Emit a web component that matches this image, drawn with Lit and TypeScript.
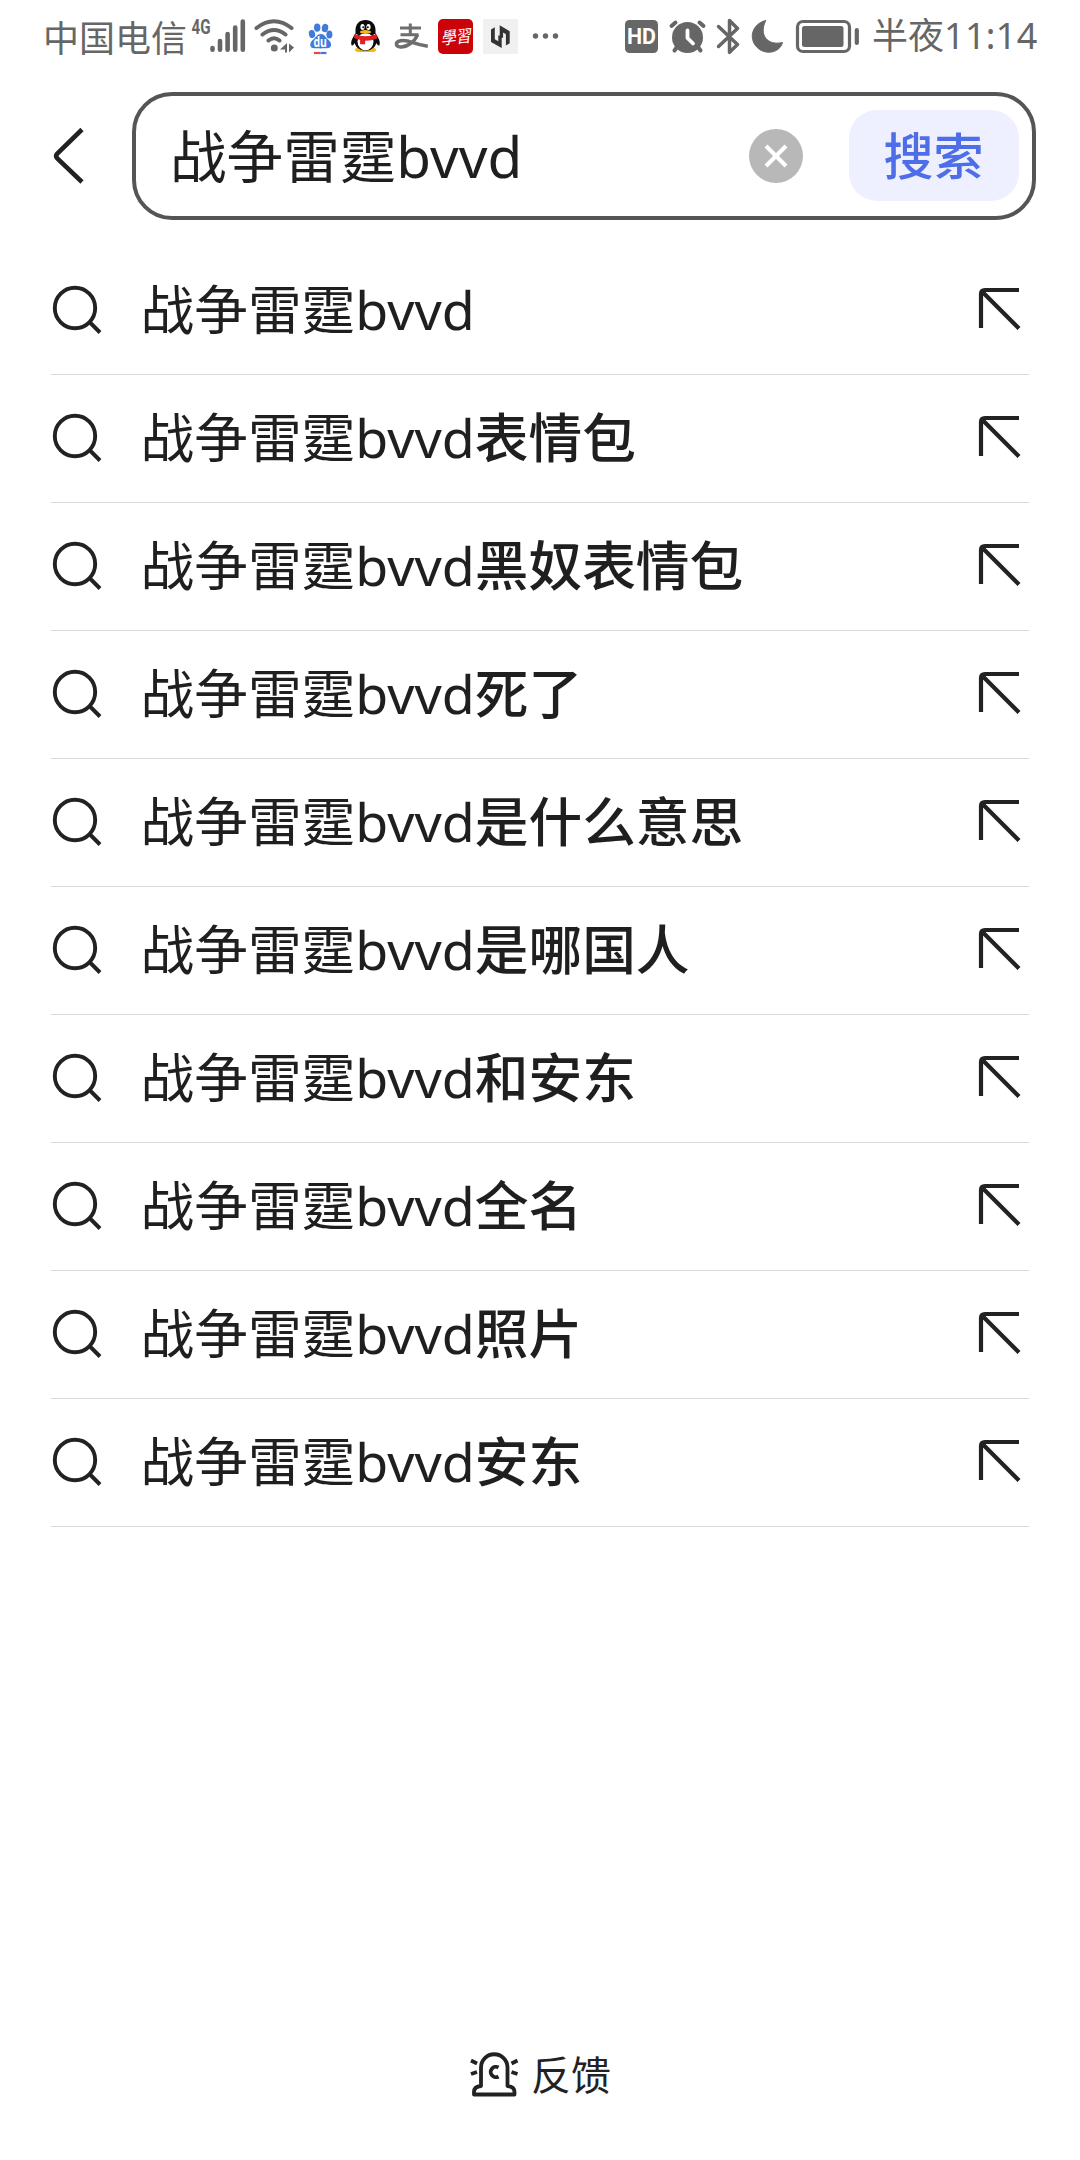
import { LitElement, html, css } from "lit";
import { customElement, property } from "lit/decorators.js";

const FONT = css`"Noto Sans", "Noto Sans CJK SC", sans-serif`;

@customElement("status-bar")
class StatusBar extends LitElement {
  static styles = css`
    :host {
      display: flex;
      justify-content: space-between;
      box-sizing: border-box;
      width: 100%;
      height: 72px;
      padding: 0 42px 0 43px;
      color: #666;
      font: 400 36px/72px ${FONT};
    }
    .group { display: flex; align-items: flex-start; white-space: nowrap; }
    .carrier { width: 147px; height: 72px; font-family: "Noto Sans CJK SC", sans-serif; }
    .time { width: 166px; height: 72px; }
    .digits { display: inline-block; letter-spacing: 0.3px; }
    svg { display: block; flex: none; }
    .net { font: 700 21px Roboto, sans-serif; fill: #666; }
    .hd { font: 700 22.5px Roboto, sans-serif; fill: #fff; }
    .du { font: 700 14px "Open Sans", sans-serif; fill: #fff; }
    .study { font: italic 400 17px "Noto Sans CJK TC", sans-serif; fill: #fff; }
  `;

  render() {
    return html`
      <div class="group">
        <span class="carrier">中国电信</span>
        <svg width="58" height="72" viewBox="190 0 58 72">
          <text class="net" x="191.500" y="34" textLength="19" lengthAdjust="spacingAndGlyphs">4G</text>
          <g stroke="#666" stroke-width="4.600" stroke-linecap="round">
            <path d="M212.500 48v1.800M220 41v8.800M227.600 34v15.800M235.200 27.500v22.300M242.800 21.500v28.300" />
          </g>
        </svg>
        <svg width="52" height="72" viewBox="248 0 52 72">
          <g fill="none" stroke="#666" stroke-width="4" stroke-linecap="round">
            <path d="M256.500 28Q274 14.500 291.500 28M262.500 34.500Q274 25.500 285.500 34.500M268.500 40.500Q274 36 279.500 40.500" />
          </g>
          <circle cx="274.300" cy="48" r="3.500" fill="#666" />
          <path d="M287 43v9.500h-2v-3h-5zM289 43.500v9l5-5z" fill="#666" />
        </svg>
        <svg width="42" height="72" viewBox="300 0 42 72">
          <g fill="#3f7bd9">
            <ellipse cx="312" cy="34" rx="3.100" ry="4.100" transform="rotate(-12 312 34)" />
            <ellipse cx="317.200" cy="27.600" rx="3.200" ry="4.200" />
            <ellipse cx="325" cy="28" rx="3.200" ry="4.200" transform="rotate(12 325 28)" />
            <ellipse cx="329.400" cy="34.500" rx="3" ry="4" />
            <path d="M321 34c-3.500 0-5 3.200-7.500 5.200-5 4-3.800 9 .8 9.100 3.200.1 9.200.1 12.600 0 5.200-.2 5.500-5.300 1.400-8.600-2.700-2.200-3.900-5.700-7.300-5.700z" />
          </g>
          <text class="du" x="313.500" y="46.500" textLength="13.500" lengthAdjust="spacingAndGlyphs">du</text>
          <path d="M314 53h6.500" stroke="#e24a4a" stroke-width="2.200" />
          <path d="M320.500 53h6" stroke="#3f7bd9" stroke-width="2.200" />
        </svg>
        <svg width="48" height="72" viewBox="342 0 48 72">
          <path d="M355 50q0-2.500 4-2.500h13q4 0 4 2.500 0 2-5 2h-11q-5 0-5-2z" fill="#f5b51c" />
          <path d="M356 33c-4 5-5.500 9-4.500 12 .6 1.500 2.500-.5 4-3zM375 33c4 5 5.500 9 4.500 12-.6 1.500-2.500-.5-4-3z" fill="#0b0b0b" />
          <ellipse cx="365.500" cy="41" rx="11" ry="10" fill="#0b0b0b" />
          <ellipse cx="365.500" cy="41.500" rx="8" ry="9" fill="#fff" />
          <path d="M355.500 34v-4c0-6 4-10 10-10s10 4 10 10v4z" fill="#0b0b0b" />
          <path d="M354.500 34q11 4.500 22 0l.6 4.500q-6 2.500-12 2.300v3.500h-5v-4.500q-3-.3-6-1.800z" fill="#e01f26" />
          <ellipse cx="362.500" cy="27" rx="2.100" ry="3" fill="#fff" />
          <ellipse cx="368.500" cy="27" rx="2.100" ry="3" fill="#fff" />
          <circle cx="363.200" cy="27.300" r="1" fill="#111" />
          <circle cx="367.800" cy="27.300" r="1" fill="#111" />
          <ellipse cx="365.500" cy="32" rx="5.600" ry="1.900" fill="#f5b51c" />
        </svg>
        <svg width="44" height="72" viewBox="390 0 44 72">
          <g fill="none" stroke="#6e6e6e" stroke-width="3">
            <path d="M400 28h21M410.300 23.500v11M400.500 34.700h18" />
            <path d="M417.500 34.500C415 42 406 47.500 400.500 47c-5-.4-5-4-2-5.600 4.500-2.300 10-.5 14.500 1.200Q420 45 427.800 46.300" stroke-width="3.500" />
          </g>
        </svg>
        <svg width="44" height="72" viewBox="434 0 44 72">
          <rect x="438" y="19" width="35" height="35" rx="5" fill="#cb0207" />
          <text class="study" x="440.500" y="43" textLength="30" lengthAdjust="spacingAndGlyphs" transform="rotate(-6 455 36)">學習</text>
        </svg>
        <svg width="50" height="72" viewBox="478 0 50 72">
          <rect x="483" y="19" width="35" height="35" fill="#f0f0f0" />
          <g fill="#333">
            <path d="M491 29.500l3.800-2.300v12l3.500 2v-5.700h3.400V48L491 42z" />
            <path d="M509.700 43.300l-3.800 2.300V34.200l-2.800-1.700v5.200h-3.400V25.300l10 6z" />
          </g>
        </svg>
        <svg width="36" height="72" viewBox="528 0 36 72" fill="#666">
          <circle cx="535.500" cy="36" r="2.700" /><circle cx="545.500" cy="36" r="2.700" /><circle cx="555.500" cy="36" r="2.700" />
        </svg>
      </div>
      <div class="group">
        <svg width="44" height="72" viewBox="620 0 44 72">
          <rect x="625" y="20" width="33" height="33" rx="4.500" fill="#666" />
          <text class="hd" x="627" y="44.300" textLength="29" lengthAdjust="spacingAndGlyphs">HD</text>
        </svg>
        <svg width="46" height="72" viewBox="664 0 46 72">
          <circle cx="687.500" cy="37.500" r="15.500" fill="#666" />
          <g fill="none" stroke="#666" stroke-width="4" stroke-linecap="round">
            <path d="M671.500 26l4-3.500M703.500 26l-4-3.500M677 47l-2.500 3.500M698 47l2.500 3.500" />
          </g>
          <path d="M687.500 30.500v7.500l5.500 5.500" fill="none" stroke="#fff" stroke-width="3.800" stroke-linecap="round" stroke-linejoin="round" />
        </svg>
        <svg width="37" height="72" viewBox="710 0 37 72">
          <path d="M718.500 26.500L737.500 44.500 729.500 52.300V20.500L737.500 28.500 718.500 46.500" fill="none" stroke="#666" stroke-width="3.500" stroke-linecap="round" stroke-linejoin="round" />
        </svg>
        <svg width="44" height="72" viewBox="747 0 44 72">
          <path d="M765.800 20.500C752 24 748.500 38 756.500 46.800 764.500 55.500 779.500 53.500 782.500 42.500 767.500 46 758.500 35 765.800 20.500z" fill="#666" stroke="#666" stroke-linejoin="round" />
        </svg>
        <svg width="81" height="72" viewBox="791 0 81 72">
          <rect x="797.500" y="21.500" width="52" height="30" rx="5.500" fill="none" stroke="#666" stroke-width="3.200" />
          <rect x="802" y="26" width="41.500" height="21" rx="2.500" fill="#666" />
          <path d="M856.800 30v13" stroke="#666" stroke-width="4.200" stroke-linecap="round" />
        </svg>
        <span class="time">半夜<span class="digits">11:14</span></span>
      </div>
    `;
  }
}

@customElement("search-header")
class SearchHeader extends LitElement {
  @property() query = "";

  static styles = css`
    :host {
      display: flex;
      box-sizing: border-box;
      width: 100%;
      padding: 20px 44px 0 50px;
      align-items: center;
      font-family: ${FONT};
    }
    svg { display: block; flex: none; }
    .back { width: 40px; height: 60px; margin-right: 42px; }
    .box {
      flex: 1;
      display: flex;
      align-items: center;
      box-sizing: border-box;
      height: 128px;
      padding: 0 13px 0 34px;
      border: 4px solid #555;
      border-radius: 40px;
    }
    .query {
      flex: 1;
      font-size: 56.6px;
      line-height: 80px;
      color: #1f1f1f;
      white-space: nowrap;
    }
    .clear { margin-right: 46px; }
    .go {
      width: 170px;
      height: 91px;
      border-radius: 28px;
      background: #eef0ff;
      color: #4e6ee8;
      font: 500 50px/87px "Noto Sans CJK SC", sans-serif;
      text-align: center;
      text-indent: -1px;
      margin-top: -1px;
    }
  `;

  render() {
    return html`
      <svg class="back" viewBox="50 126 40 60">
        <path d="M82 129.500L57.300 153.500Q55 156 57.300 158.500L82 182" fill="none" stroke="#222" stroke-width="4.600" />
      </svg>
      <div class="box">
        <span class="query">${this.query}</span>
        <svg class="clear" width="54" height="54" viewBox="0 0 54 54">
          <circle cx="27" cy="27" r="27" fill="#b8b8b8" />
          <path d="M17 17l20 20M37 17L17 37" stroke="#fff" stroke-width="4" />
        </svg>
        <div class="go">搜索</div>
      </div>
    `;
  }
}

@customElement("suggestion-row")
class SuggestionRow extends LitElement {
  @property() prefix = "";
  @property() suffix = "";

  static styles = css`
    :host {
      display: flex;
      align-items: center;
      box-sizing: border-box;
      height: 128px;
      border-bottom: 1px solid #d9d9d9;
      font: 400 53.7px/80px ${FONT};
      color: #1f1f1f;
    }
    svg { display: block; flex: none; margin-top: -2px; }
    .label {
      flex: 1;
      margin-left: 35.5px;
      margin-top: -2px;
      white-space: nowrap;
    }
    .rest { font-weight: 500; }
    .fill { margin-right: 6px; }
  `;

  render() {
    return html`
      <svg width="54" height="54" viewBox="51 283 54 54" fill="none" stroke="#222" stroke-width="3.900">
        <circle cx="75" cy="308" r="20.200" />
        <path d="M89.500 322l10.500 10.500" />
      </svg>
      <span class="label">${this.prefix}<span class="rest">${this.suffix}</span></span>
      <svg class="fill" width="46" height="46" viewBox="977 287 46 46" fill="none" stroke="#222" stroke-width="4.200">
        <path d="M981 328v-34q0-4 4-4h34M982 291.500l37 37" />
      </svg>
    `;
  }
}

@customElement("app-root")
class AppRoot extends LitElement {
  private readonly query = "战争雷霆bvvd";
  private readonly suffixes = [
    "", "表情包", "黑奴表情包", "死了", "是什么意思", "是哪国人", "和安东", "全名", "照片", "安东",
  ];

  static styles = css`
    :host {
      display: flex;
      flex-direction: column;
      width: 1080px;
      height: 2160px;
      background: #fff;
      overflow: hidden;
    }
    .list { padding: 27px 51px 0; }
    .feedback {
      display: flex;
      justify-content: center;
      align-items: center;
      gap: 12px;
      margin-top: auto;
      height: 60px;
      padding: 0 0 56px 0;
      font: 400 40px/60px "Noto Sans CJK SC", sans-serif;
      color: #222;
    }
    .feedback span { margin-top: -2px; }
  `;

  render() {
    return html`
      <status-bar></status-bar>
      <search-header .query=${this.query}></search-header>
      <div class="list">
        ${this.suffixes.map(
          (s) => html`<suggestion-row .prefix=${this.query} .suffix=${s}></suggestion-row>`,
        )}
      </div>
      <div class="feedback">
        <svg width="50" height="46" viewBox="469 2051 50 46" fill="none" stroke="#222" stroke-width="3.800">
          <path d="M481 2086v-18.500a13 13 0 0 1 26.500 0V2086q7 .5 7 6v2.500h-40.500V2092q0-5.500 7-6z" stroke-linejoin="round" />
          <path d="M498.500 2067.500a5.200 5.200 0 1 0 0 9M471 2060.500l6 3M471 2074l6-2M517.500 2060.500l-6 3M517.500 2074l-6-2" />
        </svg>
        <span>反馈</span>
      </div>
    `;
  }
}
